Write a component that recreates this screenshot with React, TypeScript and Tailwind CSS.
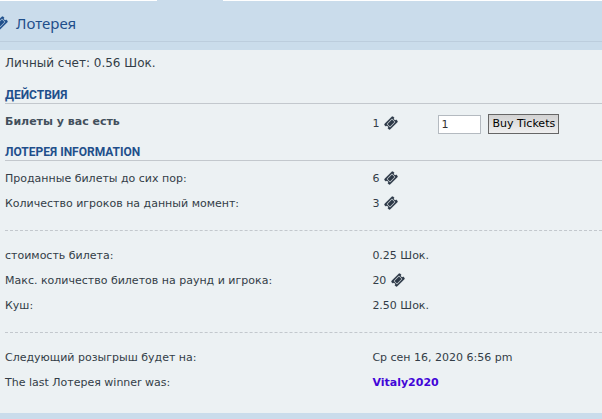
import type { ReactNode } from "react";

function TicketIcon({ className = "" }: { className?: string }) {
  return (
    <svg
      viewBox="0 0 1792 1792"
      fill="currentColor"
      stroke="currentColor"
      strokeWidth="24"
      className={`shrink-0 ${className}`}
      aria-hidden="true"
    >
      <path d="M1024 452l316 316-572 572-316-316zM813 1431l618-618q19-19 19-45t-19-45l-362-362q-18-18-45-18t-45 18l-618 618q-19 19-19 45t19 45l362 362q18 18 45 18t45-18zM1702 794l-907 908q-37 37-90.5 37t-90.5-37l-126-126q56-56 56-136t-56-136-136-56-136 56l-125-126q-37-37-37-90.5t37-90.5l907-906q37-37 90.5-37t90.5 37l125 125q-56 56-56 136t56 136 136 56 136-56l126 125q37 37 37 90.5t-37 90.5z" />
    </svg>
  );
}

function Tickets({ count }: { count: number }) {
  return (
    <span className="flex items-center gap-[5px]">
      {count}
      <TicketIcon className="mb-0.5 size-3.5 text-[#2b3745]" />
    </span>
  );
}

function SectionTitle({ children }: { children: ReactNode }) {
  return (
    <h3 className="border-b border-[#c3c8cd] font-[Roboto,Arial,sans-serif] text-xs leading-4 font-bold text-[#1f4f8b] uppercase">
      {children}
    </h3>
  );
}

function Row({ label, children }: { label: string; children: ReactNode }) {
  return (
    <div className="grid grid-cols-[8fr_5fr] leading-6">
      <dt>{label}</dt>
      <dd>{children}</dd>
    </div>
  );
}

function Divider() {
  return <hr className="mt-3.5 mb-[13px] border-t border-dashed border-[#c3c8cd]" />;
}

export default function App() {
  return (
    <div className="overflow-hidden bg-[#cadceb] font-['DejaVu_Sans',Verdana,sans-serif] text-[11px] text-[#333d47]">
      {/* Bottom edge of the tab bar, open under the active tab */}
      <div className="flex h-px">
        <div className="w-[26%] bg-white" />
        <div className="w-[11%]" />
        <div className="flex-1 bg-white" />
      </div>

      <header className="-ml-1.5 flex h-[41px] items-center gap-2 border-b border-[#bccddd] pt-1 text-[#1f4f8b]">
        <TicketIcon className="size-3.5" />
        <h2 className="font-['Noto_Sans',sans-serif] text-[15px]">Лотерея</h2>
      </header>

      <main className="mt-2 mb-1.5 bg-[#ecf1f3] pt-[3px] pb-[18px] pl-[5px]">
        <p className="mb-3.5 text-xs leading-5">Личный счет: 0.56 Шок.</p>

        <SectionTitle>Действия</SectionTitle>
        <form
          className="grid h-10 grid-cols-[8fr_5fr] items-center"
          onSubmit={(e) => e.preventDefault()}
        >
          <label htmlFor="tickets" className="pb-1 font-bold text-[#424f5c]">
            Билеты у вас есть
          </label>
          <div className="flex items-center">
            <span className="w-[66px]">
              <Tickets count={1} />
            </span>
            <input
              id="tickets"
              type="text"
              defaultValue="1"
              className="mr-[7px] h-[19px] w-[43px] border border-[#b4bac0] bg-white px-0.5 text-[#333333]"
            />
            <button
              type="submit"
              className="h-5 border border-[#666666] bg-linear-to-b from-[#d2d2d2] to-[#efefef] px-[3px] whitespace-nowrap text-black"
            >
              Buy Tickets
            </button>
          </div>
        </form>

        <SectionTitle>Лотерея Information</SectionTitle>
        <dl className="mt-1.5 grid gap-px">
          <Row label="Проданные билеты до сих пор:">
            <Tickets count={6} />
          </Row>
          <Row label="Количество игроков на данный момент:">
            <Tickets count={3} />
          </Row>
        </dl>
        <Divider />
        <dl className="grid gap-px">
          <Row label="стоимость билета:">0.25 Шок.</Row>
          <Row label="Макс. количество билетов на раунд и игрока:">
            <Tickets count={20} />
          </Row>
          <Row label="Куш:">2.50 Шок.</Row>
        </dl>
        <Divider />
        <dl className="grid gap-px">
          <Row label="Следующий розыгрыш будет на:">Ср сен 16, 2020 6:56 pm</Row>
          <Row label="The last Лотерея winner was:">
            <a href="#" className="font-bold text-[#4206d8]">
              Vitaly2020
            </a>
          </Row>
        </dl>
      </main>
    </div>
  );
}
